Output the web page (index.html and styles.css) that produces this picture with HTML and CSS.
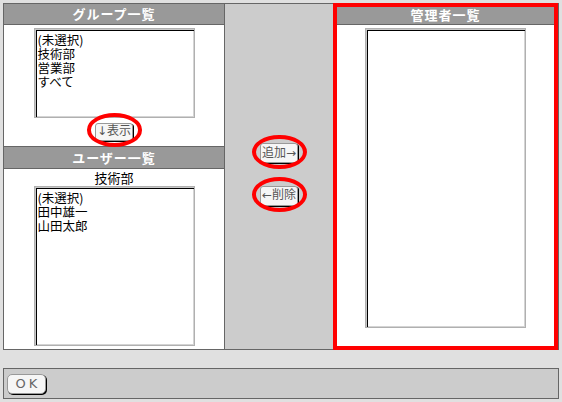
FILE: index.html
```html
<!DOCTYPE html>
<html lang="ja">
  <head>
    <meta charset="UTF-8" />
    <title>管理者設定</title>
    <link rel="stylesheet" href="styles.css">
  </head>
  <body>
    <div class="main">
      <div class="col-left">
        <!-- グループ -->
        <div class="group">
          <h2 class="bar">グループ一覧</h2>
          <div class="listbox group-list">
            <div>(未選択)</div>
            <div>技術部</div>
            <div>営業部</div>
            <div>すべて</div>
          </div>
          <div class="btn-row">
            <span class="mark"><button class="btn">↓表示</button></span>
          </div>
        </div>

        <!-- ユーザー -->
        <div class="users">
          <h2 class="bar">ユーザー一覧</h2>
          <div class="dept">技術部</div>
          <div class="listbox user-list">
            <div>(未選択)</div>
            <div>田中雄一</div>
            <div>山田太郎</div>
          </div>
        </div>
      </div>

      <div class="col-mid">
        <span class="mark"><button class="btn">追加→</button></span>
        <span class="mark"><button class="btn">←削除</button></span>
      </div>

      <div class="col-right">
        <h2 class="bar">管理者一覧</h2>
        <div class="listbox admin-list"></div>
      </div>
    </div>

    <div class="footer">
      <button class="btn ok">OK</button>
    </div>
  </body>
</html>
```

FILE: styles.css
```css
* {
  margin: 0;
  padding: 0;
  box-sizing: border-box;
}

body {
  font-family: 'Noto Sans CJK JP', 'DejaVu Sans', sans-serif;
  font-size: 13px;
  color: #000;
  background: #e0e0e0;
  padding: 3px;
}

.main {
  display: grid;
  grid-template-columns: 221px 108px 225px;
  width: 556px;
  height: 347px;
  border: 1px solid #666;
}

.bar {
  background: #999;
  color: #fff;
  font-size: 13px;
  font-weight: 700;
  letter-spacing: 1px;
  text-align: center;
  height: 21px;
  line-height: 20px;
  border-bottom: 1px solid #666;
}

/* 左カラム */
.col-left {
  background: #fff;
  border-right: 1px solid #666;
  display: flex;
  flex-direction: column;
}

.group {
  height: 142px;
}

.users .bar {
  border-top: 1px solid #666;
  height: 23px;
  line-height: 21px;
}

.listbox {
  width: 161px;
  margin: 3px auto 0;
  background: #fff;
  border: 1px solid #b0b0b0;
  box-shadow: inset 1px 1px 0 #c8c8c8, inset 2px 2px 0 #000, inset -1px -1px 0 #d4d4d4;
  padding: 4px 3px;
  line-height: 14px;
  font-size: 12.5px;
  overflow: hidden;
}

.listbox div {
  height: 14px;
}

.group-list {
  height: 90px;
}

.btn-row {
  display: flex;
  justify-content: center;
  margin-top: 2px;
}

.dept {
  text-align: center;
  line-height: 17px;
  height: 17px;
}

.user-list {
  margin-top: 0;
  height: 160px;
}

/* ボタン */
.btn {
  font-family: 'DejaVu Sans', 'Noto Sans CJK JP', sans-serif;
  font-size: 12px;
  color: #555;
  background: #f6f6f6;
  border: 1px solid #999;
  border-radius: 3px;
  box-shadow: 1px 1px 0 #000;
  height: 18px;
  line-height: 15px;
  padding: 0;
  width: 38px;
  white-space: nowrap;
  cursor: pointer;
}

.mark {
  position: relative;
  display: inline-block;
}

.mark::after {
  content: '';
  position: absolute;
  top: -7px;
  bottom: -6px;
  left: -8px;
  right: -9px;
  border: 4px solid #f00;
  border-radius: 50%;
  pointer-events: none;
}

/* 中央カラム */
.col-mid {
  background: #ccc;
  display: flex;
  flex-direction: column;
  align-items: center;
  justify-content: center;
  gap: 21px;
  padding-bottom: 6px;
}

.col-mid .btn {
  height: 20px;
}

/* 右カラム */
.col-right {
  background: #fff;
  margin: -1px 0;
  border: 4px solid #f00;
}

.col-right .bar {
  height: 18px;
  line-height: 16px;
}

.admin-list {
  height: 300px;
}

/* フッター */
.footer {
  margin-top: 18px;
  width: 556px;
  height: 31px;
  background: #ccc;
  border: 1px solid #666;
  padding: 4px 3px;
}

.btn.ok {
  width: 39px;
  height: 20px;
  border-radius: 5px;
  letter-spacing: 3px;
  padding-left: 3px;
  font-size: 13px;
  color: #666;
}
```
